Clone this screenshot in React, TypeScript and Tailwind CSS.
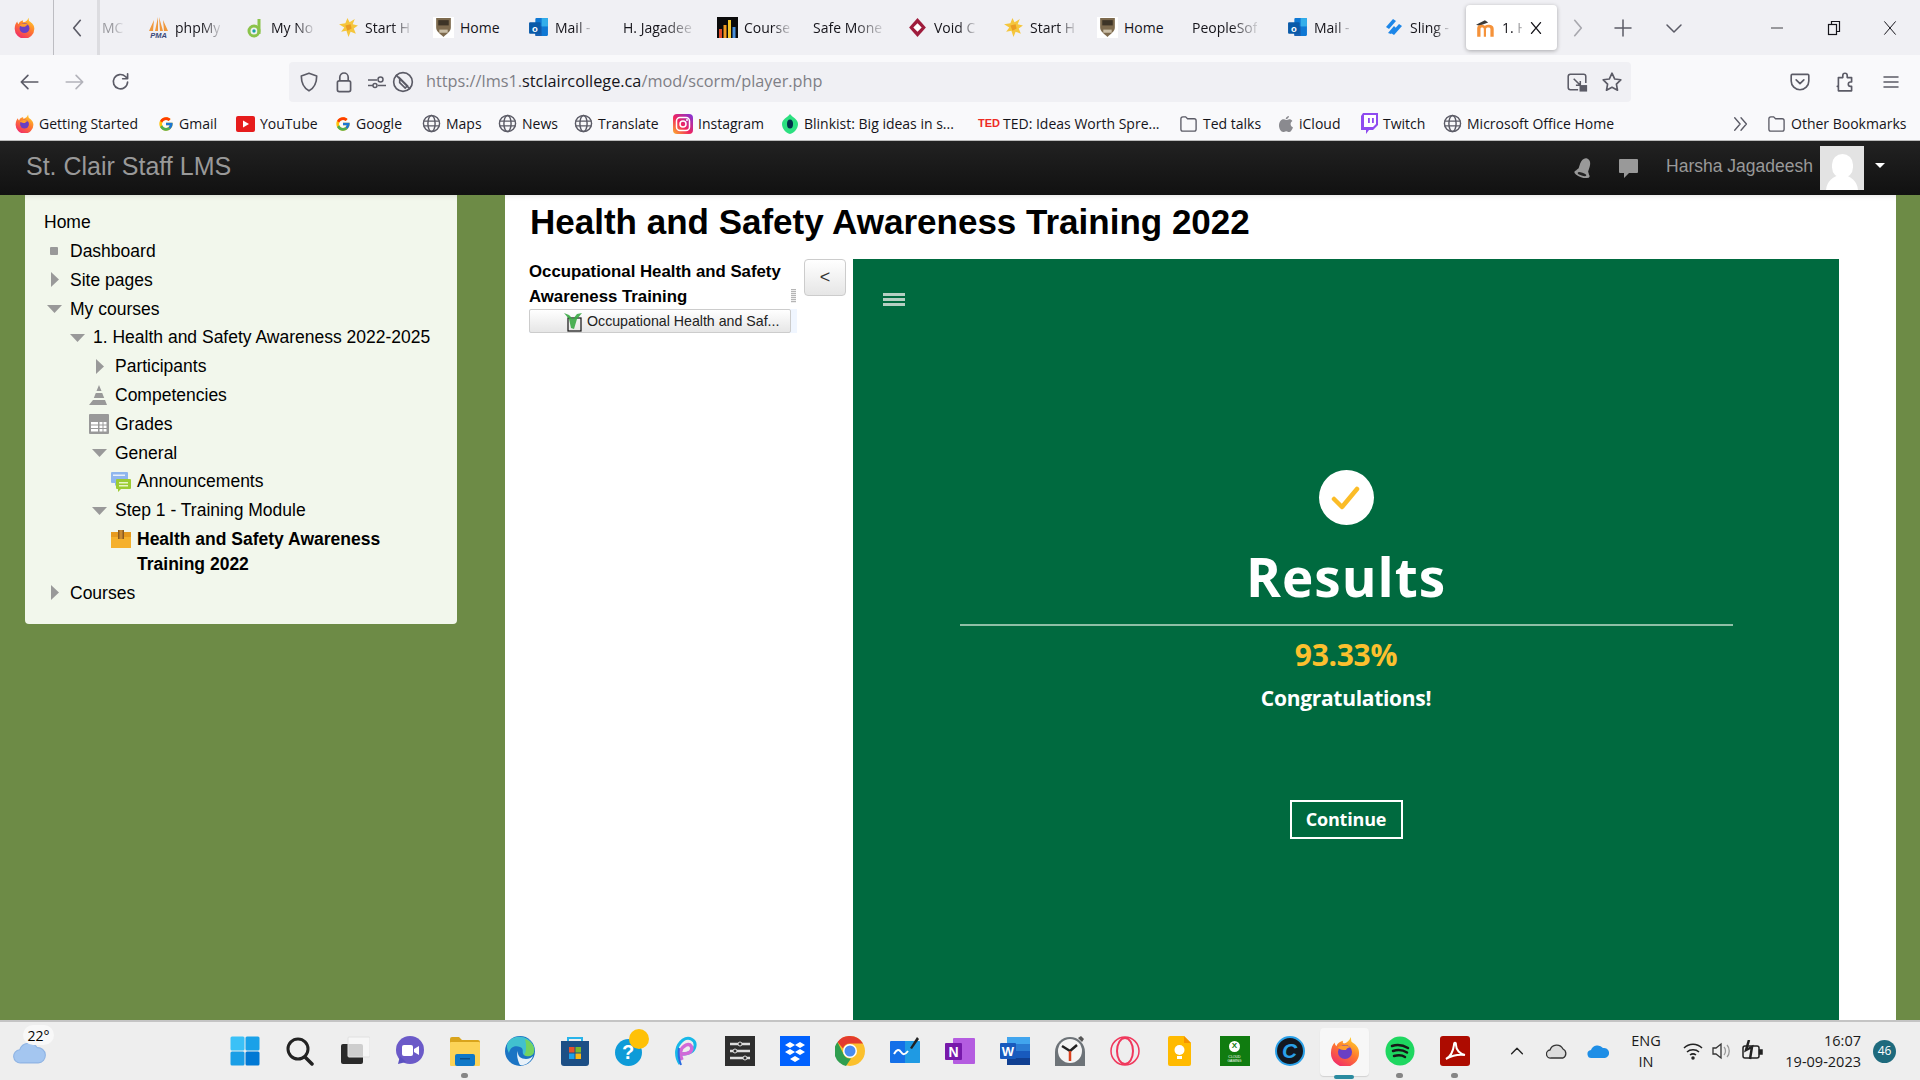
import React from "react";

type IC = { s?: number };
const Firefox = ({ s = 20 }: IC) => (
  <svg width={s} height={s} viewBox="0 0 32 32">
    <defs>
      <linearGradient id="ffa" x1="0.8" y1="0" x2="0.2" y2="1"><stop offset="0" stopColor="#ffd52b" /><stop offset="0.45" stopColor="#ff7a2e" /><stop offset="1" stopColor="#f0266e" /></linearGradient>
    </defs>
    <path d="M22 1c1 3 0 5 2 6 3 2 7 5 7 11a15 15 0 1 1-30 0C1 13 3 9 5 7c0 2 1 3 2 4 1-4 4-5 7-6-1 2 0 3 1 3 3-1 6-3 7-7z" fill="url(#ffa)" />
    <circle cx="16" cy="17" r="7.5" fill="#6a3fc4" />
    <path d="M8 12c4-2 10-3 14 0-2 0-4 1-5 3-3 0-6 0-9-3z" fill="#ff9d2e" />
  </svg>
);
const Star = ({ s = 21 }: IC) => (
  <svg width={s} height={s} viewBox="0 0 20 20"><path d="M9 1l2 4 5-3-2 5 5 1-4 3 2 5-5-2-2 5-2-6-5 1 3-4-5-3 6-1z" fill="#f5c63c" /><path d="M7 8l5-1 1 4-4 2z" fill="#ea9c22" /></svg>
);
const Crest = ({ s = 21 }: IC) => (
  <svg width={s} height={s} viewBox="0 0 20 20"><rect width="20" height="20" fill="#fff" /><path d="M3 1h14v9c0 4-4 6-7 9-3-3-7-5-7-9z" fill="#7d6a4e" /><rect x="5" y="3" width="10" height="5" fill="#3d3427" /><rect x="6" y="12" width="8" height="3" fill="#c9bda6" /></svg>
);
const Outlook = ({ s = 21 }: IC) => (
  <svg width={s} height={s} viewBox="0 0 20 20"><rect x="7" y="1" width="12" height="17" rx="1" fill="#0f78d4" /><rect x="13" y="1" width="6" height="8" fill="#33aeea" /><rect x="7" y="9" width="6" height="9" fill="#1a5fb0" /><rect x="1" y="5" width="11" height="11" rx="1" fill="#0a5aa8" /><text x="6.5" y="14" fontSize="9" fontWeight="700" textAnchor="middle" fill="#fff" fontFamily="Liberation Sans, sans-serif">o</text></svg>
);
const Pma = ({ s = 21 }: IC) => (
  <svg width={s} height={s} viewBox="0 0 21 21"><path d="M10 0l-3 14h3zM11 0l4 14h-3zM6 3L1 14h4zM15 3l5 11h-4z" fill="#f0983c" /><text x="10.5" y="20.5" fontSize="7.5" fontWeight="700" fontStyle="italic" textAnchor="middle" fill="#3a4a7a" fontFamily="Liberation Sans, sans-serif">PMA</text></svg>
);
const Note = ({ s = 20 }: IC) => (
  <svg width={s} height={s} viewBox="0 0 20 20"><circle cx="9" cy="13" r="5" fill="none" stroke="#8bc34a" strokeWidth="3" /><path d="M14 1v15" stroke="#8bc34a" strokeWidth="3" /><circle cx="9" cy="13" r="1.7" fill="#1aa3a3" /></svg>
);
const Course = ({ s = 21 }: IC) => (
  <svg width={s} height={s} viewBox="0 0 21 21"><rect width="21" height="21" fill="#0b0b0b" /><rect x="2" y="12" width="3" height="9" fill="#e24a2a" /><rect x="6.5" y="8" width="3" height="13" fill="#f29a1f" /><rect x="11" y="3" width="3" height="18" fill="#f7c92a" /><rect x="15.5" y="10" width="3" height="11" fill="#4a90d9" /></svg>
);
const Voidd = ({ s = 21 }: IC) => (
  <svg width={s} height={s} viewBox="0 0 20 20"><path d="M10 1l8 9-8 9-8-9z" fill="#9f1c3c" /><path d="M10 6l4 4-4 4-4-4z" fill="#fff" /></svg>
);
const Sling = ({ s = 20 }: IC) => (
  <svg width={s} height={s} viewBox="0 0 20 20"><path d="M9 1l3 2-7 8-3-2zM15 6l3 2-8 9-3-2zM10 8l2 2-5 6-3-1z" fill="#1c86e8" /></svg>
);
const Moodle = ({ s = 20 }: IC) => (
  <svg width={s} height={s} viewBox="0 0 20 20"><path d="M1 7l8-4 3 2-8 3z" fill="#3a3a3a" /><path d="M2 18V10c0-2 2-3 4-3 1 0 2 .5 3 1 1-.6 2-1 3-1 3 0 5 1 5 4v7h-3v-7c0-1-.5-1.500-2-1.500s-2 .5-2 1.500v7H8v-7c0-1-.5-1.500-1.500-1.500S5 9.500 5 11v7z" fill="#f5923a" /></svg>
);
const Globe = ({ s = 19 }: IC) => (
  <svg width={s} height={s} viewBox="0 0 20 20" fill="none" stroke="#5b5b66" strokeWidth="1.500"><circle cx="10" cy="10" r="8.500" /><ellipse cx="10" cy="10" rx="3.800" ry="8.500" /><path d="M1.500 7.500h17M1.500 12.500h17" /></svg>
);
const Folder = ({ s = 19 }: IC) => (
  <svg width={s} height={s} viewBox="0 0 20 20" fill="none" stroke="#5b5b66" strokeWidth="1.400"><path d="M2 5a2 2 0 0 1 2-2h3l2 2h7a2 2 0 0 1 2 2v9a2 2 0 0 1-2 2H4a2 2 0 0 1-2-2z" /></svg>
);
const GoogleG = ({ s = 16 }: IC) => (
  <svg width={s} height={s} viewBox="0 0 48 48"><path fill="#FFC107" d="M43.600 20H42v-.100H24v8.200h11.300C33.700 32.700 29.200 36 24 36c-6.600 0-12-5.400-12-12s5.400-12 12-12c3.100 0 5.900 1.200 8 3l5.700-5.700C34.100 6 29.300 4 24 4 13 4 4 13 4 24s9 20 20 20 20-9 20-20c0-1.300-.1-2.700-.4-4z" /><path fill="#FF3D00" d="M6.300 14.700l6.600 4.800C14.700 15.100 19 12 24 12c3.100 0 5.900 1.200 8 3l5.700-5.700C34.100 6 29.300 4 24 4 16.300 4 9.700 8.300 6.300 14.700z" /><path fill="#4CAF50" d="M24 44c5.200 0 9.900-2 13.400-5.200l-6.200-5.200C29.200 35.100 26.700 36 24 36c-5.200 0-9.600-3.300-11.300-8l-6.500 5C9.500 39.600 16.200 44 24 44z" /><path fill="#1976D2" d="M43.600 20H42v-.100H24v8.200h11.300c-.8 2.200-2.200 4.100-4.100 5.500l6.200 5.200C37 38.200 44 33 44 24c0-1.300-.1-2.700-.4-4z" /></svg>
);
const YouTube = () => (
  <svg width="19" height="16" viewBox="0 0 19 16"><rect width="19" height="16" rx="2" fill="#e61c1c" /><path d="M7 4.500l6 3.500-6 3.500z" fill="#fff" /></svg>
);
const Instagram = () => (
  <svg width="20" height="20" viewBox="0 0 20 20"><defs><linearGradient id="ig" x1="0" y1="1" x2="1" y2="0"><stop offset="0" stopColor="#fdb22c" /><stop offset="0.45" stopColor="#f0245f" /><stop offset="1" stopColor="#7c34e0" /></linearGradient></defs><rect width="20" height="20" rx="4" fill="url(#ig)" /><rect x="3.500" y="3.500" width="13" height="13" rx="3.500" fill="none" stroke="#fff" strokeWidth="1.500" /><circle cx="10" cy="10" r="3" fill="none" stroke="#fff" strokeWidth="1.500" /><circle cx="14" cy="6" r="1" fill="#fff" /></svg>
);
const Blinkist = () => (
  <svg width="18" height="20" viewBox="0 0 18 20"><path d="M9 0c2 3 8 5 8 10s-4 9-8 10c-4-1-8-5-8-10S7 3 9 0z" fill="#2ce080" /><ellipse cx="9" cy="10" rx="3" ry="4.500" fill="#03314b" /></svg>
);
const Apple = () => (
  <svg width="16" height="18" viewBox="0 0 16 18"><path d="M11 1c0 2-2 3.500-3.300 3.300C7.500 2.500 9.500 1 11 1zM8 5c1 0 2-.8 3.300-.8 1.200 0 2.400.6 3.100 1.800-2.700 1.600-2.200 5.300.6 6.400-.8 2-2.200 4.600-3.800 4.600-1.200 0-1.600-.8-3-.8s-1.900.8-3 .8C3 17 1 13.600 1 10.500 1 7 3.200 4.300 5.400 4.300 6.500 4.300 7.200 5 8 5z" fill="#8a8a8f" /></svg>
);
const Twitch = () => (
  <svg width="18" height="21" viewBox="0 0 18 21"><path d="M3 0h15v12l-5 5H9l-3 4v-4H1V3z" fill="#8f4bf0" /><path d="M4 2h12v9l-3 3H4z" fill="#fff" /><rect x="8" y="5" width="1.800" height="5" fill="#8f4bf0" /><rect x="12" y="5" width="1.800" height="5" fill="#8f4bf0" /></svg>
);
const Ted = () => (
  <span className="text-[11px] leading-none font-bold text-[#ee2b24] w-[20px] font-['Liberation_Sans',sans-serif]">TED</span>
);

const uiFont = "font-['Open_Sans',sans-serif]";

const tabs: { i?: React.ReactNode; t: string; w: string; fade?: boolean }[] = [
  { i: <Pma />, t: "phpMy", w: "w-[97px]", fade: true },
  { i: <Note />, t: "My No", w: "w-[93px]", fade: true },
  { i: <Star />, t: "Start H", w: "w-[95px]", fade: true },
  { i: <Crest />, t: "Home", w: "w-[95px]" },
  { i: <Outlook />, t: "Mail -", w: "w-[95px]", fade: true },
  { t: "H. Jagadee", w: "w-[94px]", fade: true },
  { i: <Course />, t: "Course", w: "w-[96px]", fade: true },
  { t: "Safe Mone", w: "w-[94px]", fade: true },
  { i: <Voidd />, t: "Void C", w: "w-[96px]", fade: true },
  { i: <Star />, t: "Start H", w: "w-[94px]", fade: true },
  { i: <Crest />, t: "Home", w: "w-[95px]" },
  { t: "PeopleSof", w: "w-[95px]", fade: true },
  { i: <Outlook />, t: "Mail -", w: "w-[97px]", fade: true },
  { i: <Sling />, t: "Sling -", w: "w-[81px]", fade: true },
];

const Tab = ({ i, t, w, fade }: { i?: React.ReactNode; t: string; w: string; fade?: boolean }) => (
  <div className={`${w} flex items-center gap-[6px] h-full shrink-0`}>
    {i}
    <span className={`whitespace-nowrap text-[14px] text-[#15141a] ${fade ? "[mask-image:linear-gradient(to_right,black_60%,rgba(0,0,0,0.15)_100%)]" : ""}`}>{t}</span>
  </div>
);

const Stroke = ({ s = 20, d, c = "#5b5b66", w = 1.500 }: { s?: number; d: string; c?: string; w?: number }) => (
  <svg width={s} height={s} viewBox="0 0 20 20" fill="none" stroke={c} strokeWidth={w} strokeLinecap="round" strokeLinejoin="round"><path d={d} /></svg>
);

const TabBar = () => (
  <div className="h-[55px] bg-[#f0f0f4] flex items-center shrink-0">
    <div className="w-[54px] h-full flex items-center justify-center border-r border-[#bdbdc2] pr-[5px]"><Firefox s={21} /></div>
    <div className="w-[45px] flex justify-center"><Stroke s={22} d="M13 3l-6 7 6 7" /></div>
    <div className="w-[51px] h-full flex items-center text-[14px] text-[#9a9a9f] border-l-[3px] border-[#dcdce0] pl-[2px] -ml-[2px]">
      <span className="[mask-image:linear-gradient(to_right,black_50%,rgba(0,0,0,0.2)_100%)] whitespace-nowrap">MC</span>
    </div>
    {tabs.map((t, n) => <Tab key={n} {...t} />)}
    <div className="w-[91px] h-[45px] ml-[1px] bg-white rounded-[4px] shadow-[0_1px_4px_rgba(0,0,0,0.3)] flex items-center pl-[9px] gap-[5px] shrink-0">
      <Moodle s={22} />
      <span className="text-[14px] w-[20px] whitespace-nowrap text-[#15141a] [mask-image:linear-gradient(to_right,black_50%,rgba(0,0,0,0.2)_100%)]">1. H</span>
      <Stroke s={18} c="#15141a" d="M5 4l10 12M15 4L5 16" />
    </div>
    <div className="w-[42px] flex justify-center"><Stroke s={22} c="#a8a8ae" d="M7 3l6 7-6 7" /></div>
    <div className="w-[48px] flex justify-center"><Stroke s={20} d="M10 2v16M2 10h16" /></div>
    <div className="w-[54px] flex justify-center"><Stroke s={20} d="M3 7l7 7 7-7" /></div>
    <div className="ml-[47px] w-[58px] flex justify-center"><Stroke s={16} c="#15141a" w={1} d="M3 10h14" /></div>
    <div className="w-[56px] flex justify-center"><svg width="14" height="16" viewBox="0 0 14 16" fill="none" stroke="#15141a" strokeWidth="1.200"><rect x="1.500" y="4.500" width="8" height="10" /><path d="M4.500 4.500V1.500h8v10h-3" /></svg></div>
    <div className="w-[56px] flex justify-center"><Stroke s={18} c="#15141a" w={1.100} d="M4 3l12 14M16 3L4 17" /></div>
  </div>
);

const NavBar = () => (
  <div className="h-[53px] bg-[#f9f9fb] flex items-center shrink-0">
    <div className="w-[54px] pl-[3px] flex justify-center"><Stroke s={22} d="M18 10H3M9 4l-6 6 6 6" /></div>
    <div className="w-[42px] flex justify-center"><Stroke s={22} c="#b3b3ba" d="M2 10h15M11 4l6 6-6 6" /></div>
    <div className="w-[50px] flex justify-center"><Stroke s={22} d="M16 10a6.500 6.500 0 1 1-2-5l2 2M16 2.500V7h-4.500" /></div>
    <div className="ml-[143px] w-[1342px] h-[40px] bg-[#f0f0f4] rounded-[4px] flex items-center pl-[9px] pr-[8px]">
      <Stroke s={22} d="M10 2l7 2.500c0 6-1.500 10.500-7 13.500C4.500 15 3 10.500 3 4.500z" />
      <div className="ml-[12px]"><svg width="24" height="24" viewBox="0 0 20 20" fill="none" stroke="#5b5b66" strokeWidth="1.400"><rect x="4.500" y="9" width="11" height="9" rx="1.500" /><path d="M6.500 9V6a3.500 3.500 0 0 1 7 0v3" /></svg></div>
      <div className="ml-[11px]"><svg width="20" height="20" viewBox="0 0 20 20" fill="none" stroke="#5b5b66" strokeWidth="1.500"><path d="M1 8h9M1 13.500h5M11 13.500h8" /><circle cx="13.500" cy="7.500" r="2.500" /><circle cx="8" cy="13.500" r="2" /></svg></div>
      <div className="ml-[5px]"><svg width="22" height="22" viewBox="0 0 20 20" fill="none" stroke="#5b5b66" strokeWidth="1.500"><circle cx="10" cy="10" r="8.500" /><path d="M3.500 3.500l13 13M7 6.500l7 7-2 2-5-5z" /></svg></div>
      <span className="ml-[12px] text-[16.300px] text-[#7f7f86] whitespace-nowrap">https://lms1.<span className="text-[#15141a]">stclaircollege.ca</span>/mod/scorm/player.php</span>
      <div className="ml-auto mr-[13px]"><svg width="22" height="22" viewBox="0 0 20 20" fill="none" stroke="#5b5b66" strokeWidth="1.400"><path d="M11 17H4a2 2 0 0 1-2-2V5a2 2 0 0 1 2-2h12a2 2 0 0 1 2 2v6M7 7l6 6M13 9v4H9" /><rect x="13" y="13.500" width="5.500" height="4.500" fill="#5b5b66" /></svg></div>
      <Stroke s={22} d="M10 2l2.500 5.300 5.500.7-4 4 1 5.500-5-2.700-5 2.700 1-5.500-4-4 5.500-.7z" />
    </div>
    <div className="ml-[146px] w-[45px] flex justify-center"><svg width="22" height="22" viewBox="0 0 20 20" fill="none" stroke="#5b5b66" strokeWidth="1.500" strokeLinecap="round" strokeLinejoin="round"><path d="M3 3h14a1 1 0 0 1 1 1v5a8 8 0 0 1-16 0V4a1 1 0 0 1 1-1zM6.500 8l3.500 3.500L13.500 8" /></svg></div>
    <div className="w-[46px] flex justify-center"><Stroke s={22} d="M8 6V4a2 2 0 0 1 4 0v2h4v4h-1a2 2 0 0 0 0 4h1v4H4v-4h-1M4 14v-8h4" /></div>
    <div className="w-[45px] flex justify-center"><Stroke s={20} d="M3 5h14M3 10h14M3 15h14" /></div>
  </div>
);

const marks: { i: React.ReactNode; t: string; w: string }[] = [
  { i: <Firefox s={19} />, t: "Getting Started", w: "w-[102px]" },
  { i: <GoogleG />, t: "Gmail", w: "w-[40px]" },
  { i: <YouTube />, t: "YouTube", w: "w-[58px]" },
  { i: <GoogleG />, t: "Google", w: "w-[49px]" },
  { i: <Globe />, t: "Maps", w: "w-[35px]" },
  { i: <Globe />, t: "News", w: "w-[35px]" },
  { i: <Globe />, t: "Translate", w: "w-[58px]" },
  { i: <Instagram />, t: "Instagram", w: "w-[66px]" },
  { i: <Blinkist />, t: "Blinkist: Big ideas in s...", w: "w-[157px]" },
  { i: <Ted />, t: "TED: Ideas Worth Spre...", w: "w-[159px]" },
  { i: <Folder />, t: "Ted talks", w: "w-[58px]" },
  { i: <Apple />, t: "iCloud", w: "w-[44px]" },
  { i: <Twitch />, t: "Twitch", w: "w-[43px]" },
  { i: <Globe />, t: "Microsoft Office Home", w: "w-[153px]" },
];

const Mark = ({ i, t, w }: { i: React.ReactNode; t: string; w: string }) => (
  <div className="flex items-center gap-[5px] shrink-0">
    {i}
    <span className={`${w} whitespace-nowrap text-[14px] text-[#15141a]`}>{t}</span>
  </div>
);

const Bookmarks = () => (
  <div className="h-[32px] bg-[#f9f9fb] flex items-center pl-[15px] pr-[14px] pb-[1px] gap-[17px] shrink-0">
    {marks.map((m) => <Mark key={m.t} {...m} />)}
    <div className="ml-auto"><Stroke s={18} d="M3 3l6 7-6 7M10 3l6 7-6 7" /></div>
    <Mark i={<Folder />} t="Other Bookmarks" w="w-[115px]" />
  </div>
);

const Header = () => (
  <div className="h-[55px] shrink-0 bg-gradient-to-b from-[#222222] to-[#111111] border-t border-[#bbbbbb] flex items-center pl-[26px] font-['Liberation_Sans',sans-serif]">
    <span className="text-[25px] text-[#999999] mb-[3px]">St. Clair Staff LMS</span>
    <div className="ml-auto flex items-center">
      <svg width="22" height="24" viewBox="0 0 22 24"><g transform="rotate(18 11 12)"><path d="M11 2c3 0 5 3 5 7v5l2 3H4l2-3V9c0-4 2-7 5-7z" fill="#999" /><ellipse cx="11" cy="18.500" rx="8" ry="3.200" fill="#999" /><ellipse cx="11" cy="18.500" rx="4.500" ry="1.500" fill="#222" /></g></svg>
      <svg className="ml-[23px] mr-[27px]" width="21" height="21" viewBox="0 0 21 21"><path d="M2 1h17a1 1 0 0 1 1 1v12a1 1 0 0 1-1 1h-8l-5 5v-5H2a1 1 0 0 1-1-1V2a1 1 0 0 1 1-1z" fill="#999" /></svg>
      <span className="text-[17.500px] text-[#999999] mb-[3px]">Harsha Jagadeesh</span>
      <div className="ml-[7px] w-[44px] h-[44px] bg-[#e3e3e3] overflow-hidden flex flex-col items-center">
        <div className="w-[21px] h-[24px] mt-[8px] rounded-full bg-white shrink-0" />
        <div className="w-[32px] h-[30px] -mt-[3px] rounded-t-full bg-white shrink-0" />
      </div>
      <div className="ml-[11px] mr-[35px] mb-[6px] w-0 h-0 border-x-[5px] border-x-transparent border-t-[5px] border-t-white" />
    </div>
  </div>
);

const RightTri = () => <svg width="9" height="15" viewBox="0 0 9 15"><path d="M1 0l8 7.500L1 15z" fill="#999" /></svg>;
const DownTri = () => <svg width="15" height="9" viewBox="0 0 15 9"><path d="M0 1h15L7.500 9z" fill="#999" /></svg>;
const Dot = () => <div className="w-[8px] h-[8px] bg-[#999] rounded-[1px]" />;
const Pyramid = () => <svg width="20" height="20" viewBox="0 0 20 20"><path d="M10 0l2.500 6h-5zM6.800 8h6.400l2 5H4.800zM4 15h12l2 5H0z" fill="#999" /></svg>;
const Grades = () => (
  <svg width="20" height="20" viewBox="0 0 20 20"><rect width="20" height="20" rx="1" fill="#999" /><g fill="#fff"><rect x="2" y="8" width="7" height="2.500" /><rect x="2" y="11.500" width="7" height="2.500" /><rect x="2" y="15" width="7" height="2.500" /><rect x="10.500" y="8" width="3" height="2.500" /><rect x="14.500" y="8" width="3" height="2.500" /><rect x="10.500" y="11.500" width="3" height="2.500" /><rect x="14.500" y="11.500" width="3" height="2.500" /><rect x="10.500" y="15" width="3" height="2.500" /><rect x="14.500" y="15" width="3" height="2.500" /></g></svg>
);
const Forum = () => (
  <svg width="20" height="20" viewBox="0 0 20 20"><path d="M1 0h15a1 1 0 0 1 1 1v9a1 1 0 0 1-1 1H7l-3 3v-3H1a1 1 0 0 1-1-1V1a1 1 0 0 1 1-1z" fill="#8fb6ee" /><rect x="2" y="2.500" width="12" height="1.500" fill="#e8f0fc" /><path d="M6 7h13a1 1 0 0 1 1 1v8a1 1 0 0 1-1 1h-9l-3 3v-3H6a1 1 0 0 1-1-1V8a1 1 0 0 1 1-1z" fill="#9ccc33" /><rect x="8" y="10" width="9" height="1.500" fill="#e8f5c8" /><rect x="8" y="13" width="9" height="1.500" fill="#e8f5c8" /></svg>
);
const Box = () => (
  <svg width="20" height="18" viewBox="0 0 20 18"><rect y="2" width="20" height="16" fill="#f5b02c" /><rect y="2" width="20" height="5" fill="#e79a1e" /><rect x="7" y="0" width="6" height="9" fill="#8a5a20" /><rect x="8.500" y="0" width="3" height="9" fill="#c98a33" /></svg>
);

const rows: { t: React.ReactNode; lvl: string; i?: React.ReactNode }[] = [
  { t: "Dashboard", lvl: "pl-[19px]", i: <Dot /> },
  { t: "Site pages", lvl: "pl-[19px]", i: <RightTri /> },
  { t: "My courses", lvl: "pl-[19px]", i: <DownTri /> },
  { t: "1. Health and Safety Awareness 2022-2025", lvl: "pl-[42px]", i: <DownTri /> },
  { t: "Participants", lvl: "pl-[64px]", i: <RightTri /> },
  { t: "Competencies", lvl: "pl-[64px]", i: <Pyramid /> },
  { t: "Grades", lvl: "pl-[64px]", i: <Grades /> },
  { t: "General", lvl: "pl-[64px]", i: <DownTri /> },
  { t: "Announcements", lvl: "pl-[86px]", i: <Forum /> },
  { t: "Step 1 - Training Module", lvl: "pl-[64px]", i: <DownTri /> },
];

const Row = ({ t, lvl, i }: { t: React.ReactNode; lvl: string; i?: React.ReactNode }) => (
  <div className={`${lvl} h-[28.800px] flex items-center`}>
    <div className="w-[20px] mr-[6px] flex justify-center items-center shrink-0">{i}</div>
    <span className="whitespace-nowrap">{t}</span>
  </div>
);

const Sidebar = () => (
  <div className="ml-[25px] w-[432px] self-start bg-[#f2f7ec] rounded-b-[4px] pt-[13px] pb-[17px] text-[17.500px] text-black shadow-[inset_0_6px_6px_-6px_rgba(0,0,0,0.15)] font-['Liberation_Sans',sans-serif]">
    <div className="pl-[19px] h-[28.800px] flex items-center">Home</div>
    {rows.map((r, n) => <Row key={n} {...r} />)}
    <div className="pl-[86px] flex items-start pt-[2px] h-[53.600px]">
      <div className="w-[20px] mr-[6px] mt-[3px] shrink-0"><Box /></div>
      <span className="font-bold leading-[25px] w-[260px]">Health and Safety Awareness Training 2022</span>
    </div>
    <Row t="Courses" lvl="pl-[19px]" i={<RightTri />} />
  </div>
);

const Scorm = () => (
  <div className="flex-1 min-h-0 flex font-['Liberation_Sans',sans-serif]">
    <div className="ml-[24px] w-[268px] shrink-0 relative">
      <div className="text-[16.800px] font-bold leading-[25px] text-black h-[50px] w-[262px]">
        Occupational Health and Safety Awareness Training
      </div>
      <div className="absolute left-[262px] top-[30px] w-[5px] h-[14px] bg-[repeating-linear-gradient(to_bottom,#b5b5b5_0,#b5b5b5_1px,#eeeeee_1px,#eeeeee_2px)]" />
      <div className="w-[268px] h-[24px] bg-[#f0f6ff] flex">
        <div className="w-[262px] h-[24px] bg-gradient-to-b from-[#ffffff] to-[#e6e6e6] border border-[#cccccc] rounded-[2px] flex items-center pl-[33px] pt-[1px] text-[14.200px] text-[#222] whitespace-nowrap">
          <svg width="20" height="20" viewBox="0 0 20 20" className="mr-[4px] shrink-0"><rect x="5" y="6" width="13" height="13" fill="none" stroke="#111" strokeWidth="1.200" /><path d="M1 1l5 2 4 4 4-5 5-1-5 6-3 10-3-1-2-9z" fill="#3aa845" opacity="0.9" /></svg>
          Occupational Health and Saf...
        </div>
      </div>
    </div>
    <div className="ml-[7px] w-[42px] h-[37px] shrink-0 rounded-[4px] border border-[#cccccc] bg-gradient-to-b from-[#ffffff] to-[#e6e6e6] flex items-center justify-center text-[18px] text-[#333]">&lt;</div>
    <div className="ml-[7px] w-[986px] shrink-0 bg-[#006a3f] flex flex-col font-['Open_Sans',sans-serif]">
      <div className="pl-[30px] pt-[34px] shrink-0">
        <div className="w-[22px] h-[13px] flex flex-col justify-between">
          <div className="h-[3px] bg-[#b5cfc2]" /><div className="h-[3px] bg-[#b5cfc2]" /><div className="h-[3px] bg-[#b5cfc2]" />
        </div>
      </div>
      <div className="mt-[164px] flex flex-col items-center shrink-0">
        <div className="w-[55px] h-[55px] rounded-full bg-white flex items-center justify-center">
          <svg width="30" height="26" viewBox="0 0 30 26" fill="none" stroke="#fbbc27" strokeWidth="4.500" strokeLinecap="round" strokeLinejoin="round"><path d="M3 14l8 8L26 4" /></svg>
        </div>
        <div className="mt-[22px] h-[60px] leading-[60px] text-[53px] font-bold text-white tracking-[1px]">Results</div>
        <div className="mt-[17px] w-[773px] h-[2px] bg-[#8fbfa6]" />
        <div className="mt-[9px] h-[40px] leading-[40px] text-[30px] font-bold text-[#fcc02e] -tracking-[0.3px]">93.33%</div>
        <div className="mt-[9px] h-[28px] leading-[28px] text-[21px] font-bold text-white -tracking-[0.3px]">Congratulations!</div>
        <div className="mt-[88px] w-[113px] h-[39px] border-2 border-white flex items-center justify-center text-[18px] font-bold text-white -tracking-[0.2px]">Continue</div>
      </div>
    </div>
  </div>
);

const Main = () => (
  <div className="flex-1 min-h-0 flex bg-[#6d8b46] overflow-hidden">
    <Sidebar />
    <div className="ml-[48px] w-[1391px] bg-white flex flex-col min-h-0 shadow-[inset_0_6px_6px_-6px_rgba(0,0,0,0.15)]">
      <div className="h-[64px] shrink-0 pl-[25px] pb-[9px] flex items-center text-[35px] font-bold text-black font-['Liberation_Sans',sans-serif] whitespace-nowrap">Health and Safety Awareness Training 2022</div>
      <Scorm />
    </div>
  </div>
);

/* ---- taskbar ---- */
const T30 = ({ children }: { children: React.ReactNode }) => (
  <svg width="30" height="30" viewBox="0 0 30 30">{children}</svg>
);
const task: { n: string; i: React.ReactNode; dot?: boolean; active?: boolean }[] = [
  { n: "start", i: <T30><rect width="14" height="14" x="0.500" y="0.500" rx="1.500" fill="#3bc1f7" /><rect width="14" height="14" x="15.500" y="0.500" rx="1.500" fill="#1aa1e8" /><rect width="14" height="14" x="0.500" y="15.500" rx="1.500" fill="#1a9ee6" /><rect width="14" height="14" x="15.500" y="15.500" rx="1.500" fill="#0078d4" /></T30> },
  { n: "search", i: <T30><circle cx="13" cy="13" r="10" fill="none" stroke="#222" strokeWidth="3" /><path d="M20 21l7 7" stroke="#222" strokeWidth="3.500" strokeLinecap="round" /></T30> },
  { n: "view", i: <T30><rect x="1" y="8" width="22" height="20" rx="2" fill="#2a2a2a" /><rect x="8" y="1" width="22" height="20" rx="1" fill="#f8f8f8" fillOpacity="0.8" stroke="#e0e0e0" /></T30> },
  { n: "chat", i: <T30><circle cx="15" cy="14" r="14" fill="#6b5ac8" /><path d="M3 28l2-8 6 6z" fill="#5a50c0" /><rect x="7" y="9" width="11" height="11" rx="2" fill="#fff" /><path d="M19 13l5-3v9l-5-3z" fill="#fff" /></T30> },
  { n: "files", dot: true, i: <T30><path d="M0 3a2 2 0 0 1 2-2h7l3 3h16a2 2 0 0 1 2 2v22H0z" fill="#d9a41c" /><rect y="6" width="30" height="24" rx="1" fill="#fcd357" /><rect x="5" y="18" width="20" height="12" rx="2" fill="#0f78c8" /><rect x="10" y="22" width="10" height="1.500" fill="#0a4f8a" /></T30> },
  { n: "edge", i: <T30><circle cx="15" cy="15" r="15" fill="#1b74c4" /><path d="M3 6c6-8 22-7 26 5 2 8-6 10-10 8-3-2 1-6-4-8C9 9 5 12 4 17 2 13 1 10 3 6z" fill="#41c1cf" /><path d="M20 3c6 2 10 7 9 13-1 5-7 5-10 3 2-2 3-8 1-16z" fill="#74d35f" /><path d="M13 15c-1 5 3 8 8 8 3 0 5-1 7-3-2 6-8 10-13 9-2-4-4-10-2-14z" fill="#fff" fillOpacity="0.9" /></T30> },
  { n: "store", i: <T30><path d="M8 6V2h14v4" fill="none" stroke="#28b4ea" strokeWidth="2" /><path d="M1 5h28v22a3 3 0 0 1-3 3H4a3 3 0 0 1-3-3z" fill="#1c4f85" /><rect x="9" y="11" width="5.500" height="5.500" fill="#e8512a" /><rect x="15.500" y="11" width="5.500" height="5.500" fill="#7cb82a" /><rect x="9" y="17.500" width="5.500" height="5.500" fill="#1da1e8" /><rect x="15.500" y="17.500" width="5.500" height="5.500" fill="#fcb814" /></T30> },
  { n: "help", i: <div className="relative w-[30px] h-[30px]"><div className="absolute left-0 top-[3px] w-[27px] h-[27px] rounded-full bg-[#0e9bd8] flex items-center justify-center text-white text-[20px] font-bold font-['Liberation_Sans',sans-serif]">?</div><div className="absolute left-[14px] -top-[7px] w-[20px] h-[20px] rounded-full bg-[#ffc107]" /></div> },
  { n: "pics", i: <T30><path d="M10 28c-5-8-5-18 3-24 6-4 13 0 12 6-1 7-9 8-14 8" fill="none" stroke="#17b8e8" strokeWidth="3" /><path d="M12 24c-3-6-2-12 4-15 5-2 7 3 5 6-2 3-6 3-9 3" fill="none" stroke="#d16ad8" strokeWidth="3.500" /><path d="M9 12c-1 6 0 12 2 17" stroke="#2a6ae0" strokeWidth="2" fill="none" /></T30> },
  { n: "eq", i: <T30><rect width="30" height="30" fill="#2e2e2e" /><g stroke="#ddd" strokeWidth="2.500"><path d="M5 8h20M5 15h20M5 22h20" /></g><circle cx="15" cy="8" r="2" fill="#2e2e2e" stroke="#ddd" /><circle cx="10" cy="15" r="2" fill="#2e2e2e" stroke="#ddd" /><circle cx="20" cy="22" r="2" fill="#2e2e2e" stroke="#ddd" /></T30> },
  { n: "dropbox", i: <T30><rect width="30" height="30" fill="#0061fe" /><path d="M10 6l5 3-5 3-5-3zM20 6l5 3-5 3-5-3zM10 13l5 3-5 3-5-3zM20 13l5 3-5 3-5-3zM15 20l5 3-5 3-5-3z" fill="#fff" /></T30> },
  { n: "chrome", i: <T30><circle cx="15" cy="15" r="15" fill="#fbc02d" /><path d="M15 0a15 15 0 0 1 13 7.500H15a7.500 7.500 0 0 0-7 5L2.500 6A15 15 0 0 1 15 0z" fill="#e33b2e" /><path d="M2.500 6L8.500 18a7.500 7.500 0 0 0 7.500 4.500L11 30A15 15 0 0 1 2.500 6z" fill="#2f9e4f" /><circle cx="15" cy="15" r="7" fill="#fff" /><circle cx="15" cy="15" r="5.500" fill="#4a8cf0" /></T30> },
  { n: "board", i: <T30><rect y="5" width="30" height="22" rx="1" fill="#1470e8" /><rect x="15" y="5" width="15" height="22" fill="#27b5df" fillOpacity="0.6" /><path d="M4 18c3-5 5-5 7-2s4 3 7-1" stroke="#fff" strokeWidth="2" fill="none" /><path d="M20 12l7-11 2 2-7 10z" fill="#222" /></T30> },
  { n: "note", i: <T30><rect x="8" y="2" width="22" height="26" rx="1" fill="#b45ce0" /><rect x="0" y="7" width="17" height="17" rx="1" fill="#7719aa" /><text x="8.500" y="21" fontSize="14" fontWeight="700" textAnchor="middle" fill="#fff" fontFamily="Liberation Sans, sans-serif">N</text></T30> },
  { n: "word", i: <T30><rect x="7" y="1" width="23" height="28" rx="1" fill="#2b7cd3" /><rect x="7" y="1" width="23" height="7" fill="#41a5ee" /><rect x="7" y="15" width="23" height="7" fill="#185abd" /><rect x="7" y="22" width="23" height="7" fill="#103f91" /><rect x="0" y="7" width="16" height="16" rx="1" fill="#185abd" /><text x="8" y="20" fontSize="13" fontWeight="700" textAnchor="middle" fill="#fff" fontFamily="Liberation Sans, sans-serif">W</text></T30> },
  { n: "clock", i: <T30><path d="M23 2l3-2 3 3-2 3z" fill="#555" /><path d="M15 1a15 15 0 0 1 15 15v14H0V16A15 15 0 0 1 15 1z" fill="#6d7378" /><circle cx="15" cy="15" r="12" fill="#f4f4f4" /><path d="M15 15L7 10M15 15l7-6" stroke="#222" strokeWidth="2.500" /><path d="M15 15v10" stroke="#d9411e" strokeWidth="2.500" /></T30> },
  { n: "opera", i: <T30><circle cx="15" cy="15" r="14" fill="none" stroke="#f0385c" strokeWidth="1.500" /><ellipse cx="15" cy="15" rx="8" ry="13" fill="none" stroke="#f0385c" strokeWidth="2" /></T30> },
  { n: "keep", i: <T30><path d="M5 0h14l7 7v21a2 2 0 0 1-2 2H5a2 2 0 0 1-2-2V2a2 2 0 0 1 2-2z" fill="#ffba00" /><path d="M19 0l7 7h-7z" fill="#f59300" /><circle cx="14.500" cy="14" r="5" fill="#fff" /><rect x="12" y="20" width="5" height="3" fill="#fff" /></T30> },
  { n: "xbox", i: <div className="w-[30px] h-[30px] bg-[#107c10] flex flex-col items-center pt-[5px] font-['Liberation_Sans',sans-serif]"><div className="w-[11px] h-[11px] rounded-full bg-white flex items-center justify-center text-[#107c10] text-[8px] font-bold leading-none">X</div><span className="text-[3.500px] leading-[4px] text-white mt-[3px]">CLOUD</span><span className="text-[3.500px] leading-[4px] text-white">GAMING</span></div> },
  { n: "ccleaner", i: <div className="w-[30px] h-[30px] rounded-full bg-[#131820] border-2 border-[#2aa0e8] flex items-center justify-center text-[#2aa0e8] italic font-bold text-[21px] font-['Liberation_Sans',sans-serif]">C</div> },
  { n: "firefox", active: true, i: <Firefox s={30} /> },
  { n: "spotify", dot: true, i: <T30><circle cx="15" cy="15" r="14.500" fill="#1ed760" /><path d="M7 10c6-2 11-1 16 2M8 15c5-1.500 10-1 14 1.500M9 20c4-1 8-1 11 1" fill="none" stroke="#181818" strokeWidth="2.500" strokeLinecap="round" /></T30> },
  { n: "acrobat", dot: true, i: <T30><rect width="30" height="30" rx="3" fill="#ad0b00" /><path d="M6 23c4-2 7-7 8-14 0-3 2-3 2 0 0 5 4 9 9 10-6-1-12 0-19 4z" fill="none" stroke="#fff" strokeWidth="2" /></T30> },
];

const TaskItem = ({ i, dot, active }: { i: React.ReactNode; dot?: boolean; active?: boolean }) => (
  <div className="w-[55px] h-full flex items-center justify-center relative shrink-0 pb-[1px]">
    {active && <div className="absolute left-[3px] top-[6px] w-[49px] h-[48px] bg-[#f7f7f7] rounded-[4px] shadow-[0_1px_1px_rgba(0,0,0,0.12)]" />}
    <div className="relative h-[30px] flex">{i}</div>
    {dot && <div className="absolute left-[24px] bottom-[2px] w-[7px] h-[5px] rounded-full bg-[#858585]" />}
    {active && <div className="absolute left-[17px] bottom-[1px] w-[20px] h-[4px] rounded-full bg-[#2a8ba0]" />}
  </div>
);

const Taskbar = () => (
  <div className="h-[60px] shrink-0 bg-[#eeeeee] border-t-2 border-[#c4c4c4] flex items-center font-['Open_Sans',sans-serif]">
    <div className="w-[217px] h-full shrink-0 pl-[13px] pt-[3px] relative">
      <svg width="33" height="24" viewBox="0 0 30 22" className="mt-[15px]"><path d="M7 21a6 6 0 0 1-1-12 9 9 0 0 1 16-2 7 7 0 0 1 1 14z" fill="#a4c6f0" stroke="#8fb4e4" /></svg>
      <div className="absolute left-[23px] top-[3px] w-[31px] h-[20px] bg-[#f8f8f8] rounded-full flex items-center justify-center text-[14px] text-black">22°</div>
    </div>
    {task.map((t) => <TaskItem key={t.n} {...t} />)}
    <div className="ml-[21px] w-[28px] flex justify-center"><Stroke s={18} c="#222" d="M4 13l6-6 6 6" /></div>
    <div className="ml-[15px]"><svg width="22" height="18" viewBox="0 0 22 18"><path d="M5 16a4 4 0 0 1-1-8 7 7 0 0 1 13-1 5 5 0 0 1 0 9z" fill="#dcdcdc" stroke="#333" strokeWidth="1.300" /></svg></div>
    <div className="ml-[19px]"><svg width="22" height="16" viewBox="0 0 22 16"><path d="M5 15a4 4 0 0 1-1-8 7 7 0 0 1 12-2 5 5 0 0 1 2 10z" fill="#1e8ee6" /></svg></div>
    <div className="ml-[14px] w-[46px] flex flex-col items-center text-[14.500px] leading-[21px] text-[#1a1a1a]"><span>ENG</span><span>IN</span></div>
    <div className="ml-[13px]"><svg width="22" height="20" viewBox="0 0 22 20" fill="none" stroke="#222" strokeWidth="1.500"><path d="M2 7c5-5 13-5 18 0M5 11c3-3 9-3 12 0M8 14c2-1.500 4-1.500 6 0" /><circle cx="11" cy="17" r="1" fill="#222" /></svg></div>
    <div className="ml-[7px]"><svg width="22" height="20" viewBox="0 0 22 20" fill="none" stroke="#333" strokeWidth="1.300"><path d="M2 7h3l5-4v14l-5-4H2z" /><path d="M13 6c2 2 2 6 0 8M16 4c3 3 3 9 0 12" stroke="#999" /></svg></div>
    <div className="ml-[8px]"><svg width="24" height="22" viewBox="0 0 24 22" fill="none" stroke="#222" strokeWidth="1.500"><rect x="2" y="6" width="16" height="12" rx="2" /><rect x="18.500" y="10" width="2.500" height="4" fill="#222" /><path d="M8 0l-3 10 6-3-2 12" strokeWidth="2.500" stroke="#222" /></svg></div>
    <div className="ml-[12px] w-[84px] flex flex-col items-end text-[14.500px] leading-[21px] text-[#1a1a1a] whitespace-nowrap shrink-0"><span>16:07</span><span>19-09-2023</span></div>
    <div className="ml-[12px] w-[23px] h-[23px] rounded-full bg-[#1e6a7d] flex items-center justify-center text-[12px] text-white">46</div>
  </div>
);

export default function App() {
  return (
    <div className={`w-[1920px] h-[1080px] overflow-hidden flex flex-col ${uiFont}`}>
      <TabBar />
      <NavBar />
      <Bookmarks />
      <Header />
      <Main />
      <Taskbar />
    </div>
  );
}
